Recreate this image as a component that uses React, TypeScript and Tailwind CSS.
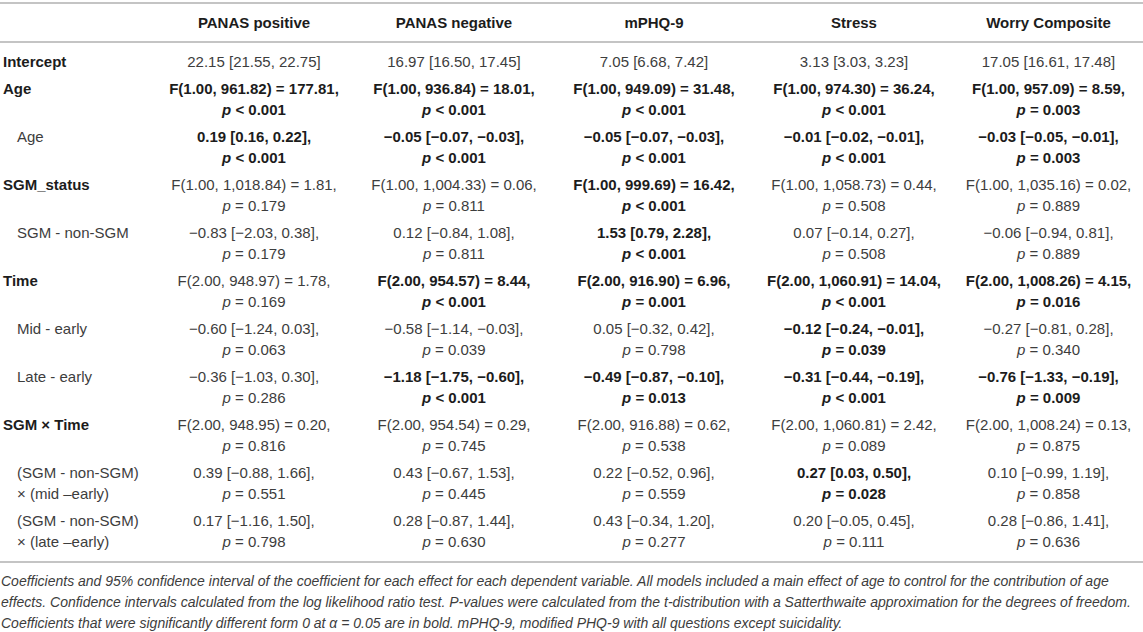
import React from "react";

type Cell = { v: string; p?: string; b?: boolean };
type Row = { label: string; label2?: string; head?: boolean; cells: Cell[] };

const M = "\u2212";

const rows: Row[] = [
  {
    label: "Intercept",
    head: true,
    cells: [
      { v: "22.15 [21.55, 22.75]" },
      { v: "16.97 [16.50, 17.45]" },
      { v: "7.05 [6.68, 7.42]" },
      { v: "3.13 [3.03, 3.23]" },
      { v: "17.05 [16.61, 17.48]" },
    ],
  },
  {
    label: "Age",
    head: true,
    cells: [
      { v: "F(1.00, 961.82) = 177.81,", p: "< 0.001", b: true },
      { v: "F(1.00, 936.84) = 18.01,", p: "< 0.001", b: true },
      { v: "F(1.00, 949.09) = 31.48,", p: "< 0.001", b: true },
      { v: "F(1.00, 974.30) = 36.24,", p: "< 0.001", b: true },
      { v: "F(1.00, 957.09) = 8.59,", p: "= 0.003", b: true },
    ],
  },
  {
    label: "Age",
    cells: [
      { v: "0.19 [0.16, 0.22],", p: "< 0.001", b: true },
      { v: `${M}0.05 [${M}0.07, ${M}0.03],`, p: "< 0.001", b: true },
      { v: `${M}0.05 [${M}0.07, ${M}0.03],`, p: "< 0.001", b: true },
      { v: `${M}0.01 [${M}0.02, ${M}0.01],`, p: "< 0.001", b: true },
      { v: `${M}0.03 [${M}0.05, ${M}0.01],`, p: "= 0.003", b: true },
    ],
  },
  {
    label: "SGM_status",
    head: true,
    cells: [
      { v: "F(1.00, 1,018.84) = 1.81,", p: "= 0.179" },
      { v: "F(1.00, 1,004.33) = 0.06,", p: "= 0.811" },
      { v: "F(1.00, 999.69) = 16.42,", p: "< 0.001", b: true },
      { v: "F(1.00, 1,058.73) = 0.44,", p: "= 0.508" },
      { v: "F(1.00, 1,035.16) = 0.02,", p: "= 0.889" },
    ],
  },
  {
    label: "SGM - non-SGM",
    cells: [
      { v: `${M}0.83 [${M}2.03, 0.38],`, p: "= 0.179" },
      { v: `0.12 [${M}0.84, 1.08],`, p: "= 0.811" },
      { v: "1.53 [0.79, 2.28],", p: "< 0.001", b: true },
      { v: `0.07 [${M}0.14, 0.27],`, p: "= 0.508" },
      { v: `${M}0.06 [${M}0.94, 0.81],`, p: "= 0.889" },
    ],
  },
  {
    label: "Time",
    head: true,
    cells: [
      { v: "F(2.00, 948.97) = 1.78,", p: "= 0.169" },
      { v: "F(2.00, 954.57) = 8.44,", p: "< 0.001", b: true },
      { v: "F(2.00, 916.90) = 6.96,", p: "= 0.001", b: true },
      { v: "F(2.00, 1,060.91) = 14.04,", p: "< 0.001", b: true },
      { v: "F(2.00, 1,008.26) = 4.15,", p: "= 0.016", b: true },
    ],
  },
  {
    label: "Mid - early",
    cells: [
      { v: `${M}0.60 [${M}1.24, 0.03],`, p: "= 0.063" },
      { v: `${M}0.58 [${M}1.14, ${M}0.03],`, p: "= 0.039" },
      { v: `0.05 [${M}0.32, 0.42],`, p: "= 0.798" },
      { v: `${M}0.12 [${M}0.24, ${M}0.01],`, p: "= 0.039", b: true },
      { v: `${M}0.27 [${M}0.81, 0.28],`, p: "= 0.340" },
    ],
  },
  {
    label: "Late - early",
    cells: [
      { v: `${M}0.36 [${M}1.03, 0.30],`, p: "= 0.286" },
      { v: `${M}1.18 [${M}1.75, ${M}0.60],`, p: "< 0.001", b: true },
      { v: `${M}0.49 [${M}0.87, ${M}0.10],`, p: "= 0.013", b: true },
      { v: `${M}0.31 [${M}0.44, ${M}0.19],`, p: "< 0.001", b: true },
      { v: `${M}0.76 [${M}1.33, ${M}0.19],`, p: "= 0.009", b: true },
    ],
  },
  {
    label: "SGM \u00d7 Time",
    head: true,
    cells: [
      { v: "F(2.00, 948.95) = 0.20,", p: "= 0.816" },
      { v: "F(2.00, 954.54) = 0.29,", p: "= 0.745" },
      { v: "F(2.00, 916.88) = 0.62,", p: "= 0.538" },
      { v: "F(2.00, 1,060.81) = 2.42,", p: "= 0.089" },
      { v: "F(2.00, 1,008.24) = 0.13,", p: "= 0.875" },
    ],
  },
  {
    label: "(SGM - non-SGM)",
    label2: "\u00d7 (mid \u2013early)",
    cells: [
      { v: `0.39 [${M}0.88, 1.66],`, p: "= 0.551" },
      { v: `0.43 [${M}0.67, 1.53],`, p: "= 0.445" },
      { v: `0.22 [${M}0.52, 0.96],`, p: "= 0.559" },
      { v: "0.27 [0.03, 0.50],", p: "= 0.028", b: true },
      { v: `0.10 [${M}0.99, 1.19],`, p: "= 0.858" },
    ],
  },
  {
    label: "(SGM - non-SGM)",
    label2: "\u00d7 (late \u2013early)",
    cells: [
      { v: `0.17 [${M}1.16, 1.50],`, p: "= 0.798" },
      { v: `0.28 [${M}0.87, 1.44],`, p: "= 0.630" },
      { v: `0.43 [${M}0.34, 1.20],`, p: "= 0.277" },
      { v: `0.20 [${M}0.05, 0.45],`, p: "= 0.111" },
      { v: `0.28 [${M}0.86, 1.41],`, p: "= 0.636" },
    ],
  },
];

const headers = ["PANAS positive", "PANAS negative", "mPHQ-9", "Stress", "Worry Composite"];

function ValueCell({ cell }: { cell: Cell }) {
  return (
    <td className={`text-center align-top py-[3px] ${cell.b ? "font-bold text-[#1c1c1c]" : "text-[#3d3d3d]"}`}>
      <div>{cell.v}</div>
      {cell.p && (
        <div>
          <span className="italic">p</span> {cell.p}
        </div>
      )}
    </td>
  );
}

export default function App() {
  return (
    <div
      className="w-[1143px] h-[632px] bg-white pt-[2px] overflow-hidden text-[15px] leading-[21px]"
      style={{ fontFamily: '"Liberation Sans", Arial, sans-serif' }}
    >
      <table className="w-full table-fixed border-collapse">
        <colgroup>
          <col className="w-[154px]" />
          <col className="w-[200px]" />
          <col className="w-[200px]" />
          <col className="w-[200px]" />
          <col className="w-[200px]" />
          <col className="w-[189px]" />
        </colgroup>
        <thead>
          <tr className="border-t-2 border-b-2 border-[#c4c4c4]">
            <th />
            {headers.map((h) => (
              <th key={h} className="py-[8px] text-center font-bold text-[#1c1c1c]">
                {h}
              </th>
            ))}
          </tr>
        </thead>
        <tbody className="border-b-2 border-[#c4c4c4]">
          {rows.map((r, i) => (
            <tr key={i} className={i === 0 ? "[&>td]:pt-[8px]" : i === rows.length - 1 ? "[&>td]:pb-[9px]" : ""}>
              <td
                className={`align-top py-[3px] whitespace-nowrap ${
                  r.head ? "pl-[3px] font-bold text-[#1c1c1c]" : "pl-[17px] text-[#3d3d3d]"
                }`}
              >
                <div>{r.label}</div>
                {r.label2 && <div>{r.label2}</div>}
              </td>
              {r.cells.map((c, j) => (
                <ValueCell key={j} cell={c} />
              ))}
            </tr>
          ))}
        </tbody>
      </table>
      <p className="pt-[8px] pl-[1px] text-[14px] leading-[21px] italic text-[#3d3d3d] whitespace-nowrap">
        Coefficients and 95% confidence interval of the coefficient for each effect for each dependent variable. All
        models included a main effect of age to control for the contribution of age
        <br />
        effects. Confidence intervals calculated from the log likelihood ratio test. P-values were calculated from the
        t-distribution with a Satterthwaite approximation for the degrees of freedom.
        <br />
        Coefficients that were significantly different form 0 at α = 0.05 are in bold. mPHQ-9, modified PHQ-9 with all
        questions except suicidality.
      </p>
    </div>
  );
}
